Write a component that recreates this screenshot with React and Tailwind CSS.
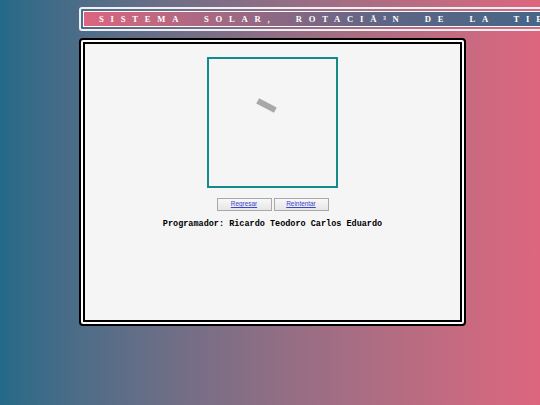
export default function App() {
  return (
    <div className="w-[540px] h-[405px] overflow-hidden bg-gradient-to-r from-[#236a88] to-[#dd667e] flex flex-col">
      <div className="ml-[79px] mt-[7px] w-[600px] shrink-0 border-2 border-[#eef0f6] rounded-[3px] p-[2px]">
        <div className="border border-white bg-gradient-to-r from-[#dc647e] via-[#5e6585] to-[#2c6788] h-[16px] flex items-center pl-[15px] whitespace-nowrap overflow-hidden">
          <span
            className="text-white font-bold text-[8.6px] tracking-[6.8px] [word-spacing:10.2px] leading-none"
            style={{ fontFamily: '"Liberation Serif", "Times New Roman", serif' }}
          >
            SISTEMA SOLAR, ROTACIÃ³N DE LA TIERRA
          </span>
        </div>
      </div>

      <div className="ml-[79px] mt-[7px] w-[387px] h-[288px] shrink-0 border-2 border-black rounded-[4px] bg-white p-[2px] flex">
        <div className="flex-1 border-2 border-black bg-[#f5f5f5] flex flex-col items-center pt-[13px]">
          <div className="w-[131px] h-[131px] border-2 border-[#138b8b] bg-[#f5f5f5]">
            <svg width="127" height="127" viewBox="0 0 127 127">
              <rect
                x="47.5"
                y="43.5"
                width="20"
                height="6"
                fill="#a8a8a8"
                transform="rotate(28 57.5 46.5)"
              />
            </svg>
          </div>
          <div className="flex gap-[2px] mt-[10px]">
            <button
              className="w-[55px] h-[13px] border border-[#a9a9a9] bg-gradient-to-b from-[#f8f8f8] to-[#e6e6e6] text-[#3a46c8] underline text-[6.4px] leading-none flex items-center justify-center"
              style={{ fontFamily: '"Liberation Sans", Arial, sans-serif' }}
            >
              Regresar
            </button>
            <button
              className="w-[55px] h-[13px] border border-[#a9a9a9] bg-gradient-to-b from-[#f8f8f8] to-[#e6e6e6] text-[#3a46c8] underline text-[6.4px] leading-none flex items-center justify-center"
              style={{ fontFamily: '"Liberation Sans", Arial, sans-serif' }}
            >
              Reintentar
            </button>
          </div>
          <div
            className="mt-[7px] text-[8.5px] font-bold text-black leading-[12px] whitespace-nowrap"
            style={{ fontFamily: '"Liberation Mono", "Courier New", monospace' }}
          >
            Programador: Ricardo Teodoro Carlos Eduardo
          </div>
        </div>
      </div>
    </div>
  );
}
